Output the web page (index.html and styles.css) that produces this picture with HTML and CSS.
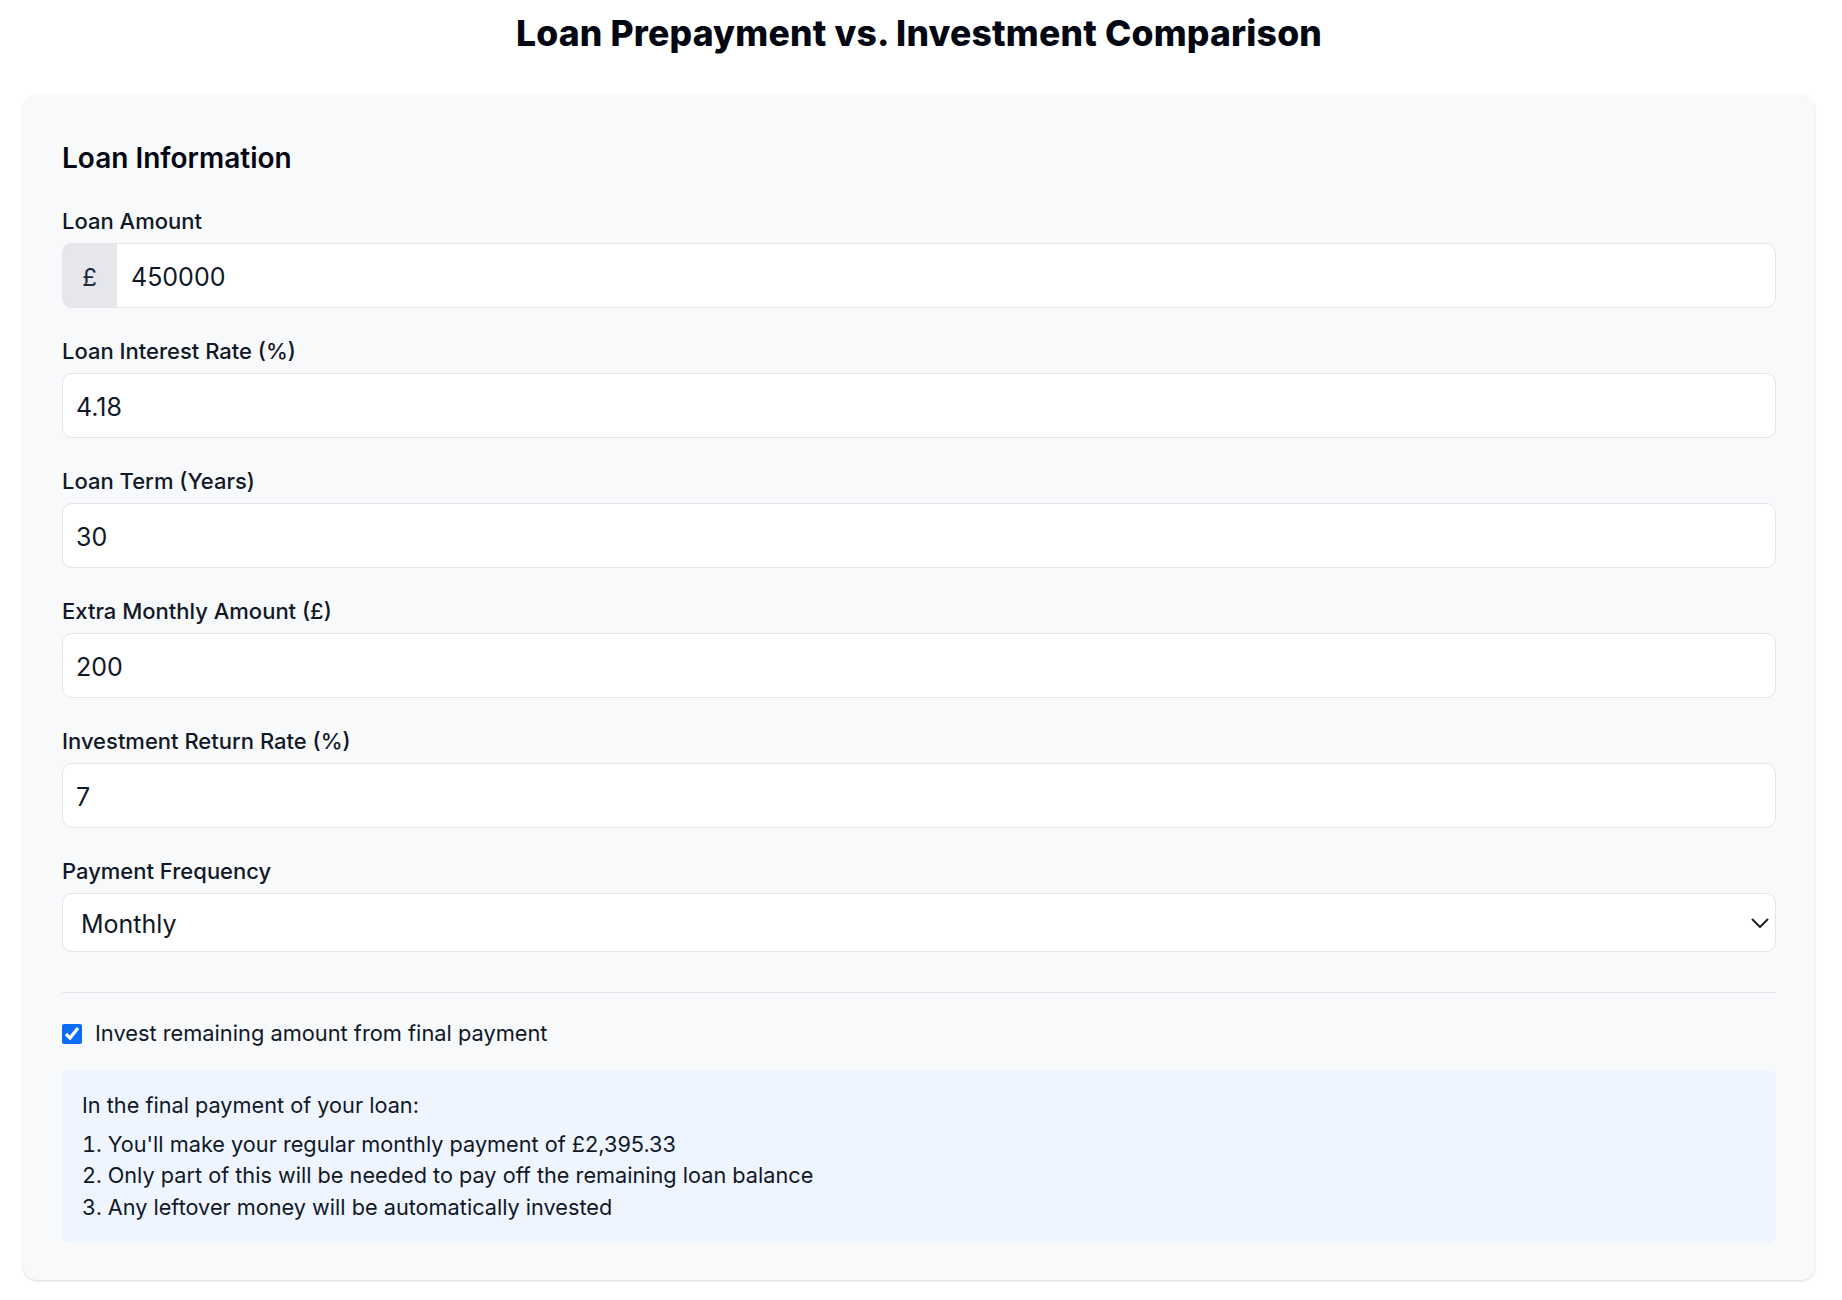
FILE: index.html
```html
<!DOCTYPE html>
<html lang="en">
<head>
    <meta charset="UTF-8">
    <meta name="viewport" content="width=device-width, initial-scale=1.0">
    <title>Loan Prepayment vs. Investment Comparison</title>
    <link rel="stylesheet" href="styles.css">
</head>
<body>
    <div class="page">
        <h1>Loan Prepayment vs. Investment Comparison</h1>

        <div class="card">
            <h2>Loan Information</h2>

            <div class="field">
                <label for="amount">Loan Amount</label>
                <div class="input-group">
                    <span class="prefix">£</span>
                    <input type="text" id="amount" value="450000">
                </div>
            </div>

            <div class="field">
                <label for="rate">Loan Interest Rate (%)</label>
                <input type="text" id="rate" value="4.18">
            </div>

            <div class="field">
                <label for="term">Loan Term (Years)</label>
                <input type="text" id="term" value="30">
            </div>

            <div class="field">
                <label for="extra">Extra Monthly Amount (£)</label>
                <input type="text" id="extra" value="200">
            </div>

            <div class="field">
                <label for="invest">Investment Return Rate (%)</label>
                <input type="text" id="invest" value="7">
            </div>

            <div class="field last">
                <label for="freq">Payment Frequency</label>
                <div class="select-wrap">
                    <select id="freq">
                        <option>Monthly</option>
                        <option>Fortnightly</option>
                        <option>Weekly</option>
                    </select>
                    <svg class="chevron" width="18" height="11" viewBox="0 0 18 11" fill="none">
                        <path d="M1.5 1.5 L9 9 L16.5 1.5" stroke="#1f2328" stroke-width="2" stroke-linecap="round" stroke-linejoin="round"/>
                    </svg>
                </div>
            </div>

            <div class="divider"></div>

            <label class="check-row">
                <input type="checkbox" checked>
                <span>Invest remaining amount from final payment</span>
            </label>

            <div class="info-box">
                <p>In the final payment of your loan:</p>
                <ol>
                    <li>You'll make your regular monthly payment of £2,395.33</li>
                    <li>Only part of this will be needed to pay off the remaining loan balance</li>
                    <li>Any leftover money will be automatically invested</li>
                </ol>
            </div>
        </div>
    </div>
</body>
</html>
```

FILE: styles.css
```css
body {
    margin: 0;
    font-family: Inter, "Noto Sans", "Liberation Sans", sans-serif;
    background: #fff;
    color: #111827;
}

.page {
    padding: 13px 27px 20px 23px;
}

h1 {
    margin: 0 0 40px;
    font-size: 35.5px;
    line-height: 42px;
    font-weight: 800;
    letter-spacing: 0.2px;
    text-align: center;
    color: #030712;
}

.card {
    background: #f8f9fb;
    border-radius: 14px;
    padding: 40px 39px 37px;
    box-shadow: 0 1px 3px rgba(0, 0, 0, 0.1), 0 1px 2px rgba(0, 0, 0, 0.05);
}

h2 {
    margin: 0 0 24px;
    font-size: 28px;
    line-height: 46px;
    font-weight: 600;
    color: #030712;
}

.field {
    margin-bottom: 27px;
}

.field.last {
    margin-bottom: 40px;
}

.field label {
    display: block;
    font-size: 22px;
    line-height: 33px;
    font-weight: 500;
    margin-bottom: 5px;
    color: #111827;
}

input[type="text"] {
    display: block;
    width: 100%;
    box-sizing: border-box;
    height: 65px;
    padding: 3px 13px 0;
    border: 1px solid #e3e5e9;
    border-radius: 10px;
    background: #fff;
    font-family: inherit;
    font-size: 25px;
    color: #111827;
    outline: none;
}

.input-group {
    display: flex;
}

.prefix {
    display: flex;
    align-items: center;
    justify-content: center;
    width: 54px;
    flex-shrink: 0;
    padding-top: 3px;
    background: #e5e7eb;
    border: 1px solid #e3e5e9;
    border-right: none;
    border-radius: 10px 0 0 10px;
    box-sizing: border-box;
    font-size: 24px;
    color: #1f2937;
}

.input-group input {
    border-radius: 0 10px 10px 0;
    padding-left: 14px;
}

.select-wrap {
    position: relative;
}

select {
    display: block;
    width: 100%;
    height: 59px;
    box-sizing: border-box;
    padding: 2px 18px 0;
    border: 1px solid #e3e5e9;
    border-radius: 10px;
    background: #fff;
    font-family: inherit;
    font-size: 25px;
    color: #111827;
    appearance: none;
    -webkit-appearance: none;
    outline: none;
}

.chevron {
    position: absolute;
    right: 7px;
    top: 25px;
    pointer-events: none;
}

.divider {
    height: 1px;
    background: #e3e5e9;
    margin-bottom: 24px;
}

.check-row {
    display: flex;
    align-items: center;
    gap: 13px;
    font-size: 21.8px;
    line-height: 33px;
    color: #111827;
    margin-bottom: 20px;
}

.check-row input {
    width: 20px;
    height: 20px;
    margin: 0;
    accent-color: #0a6cf7;
}

.info-box {
    background: #eef5ff;
    border-radius: 8px;
    padding: 20px 20px;
    font-size: 21.7px;
    line-height: 31.5px;
    color: #111827;
}

.info-box p {
    margin: 0 0 7px;
}

.info-box ol {
    margin: 0;
    padding: 0;
    list-style: decimal inside;
}
```
